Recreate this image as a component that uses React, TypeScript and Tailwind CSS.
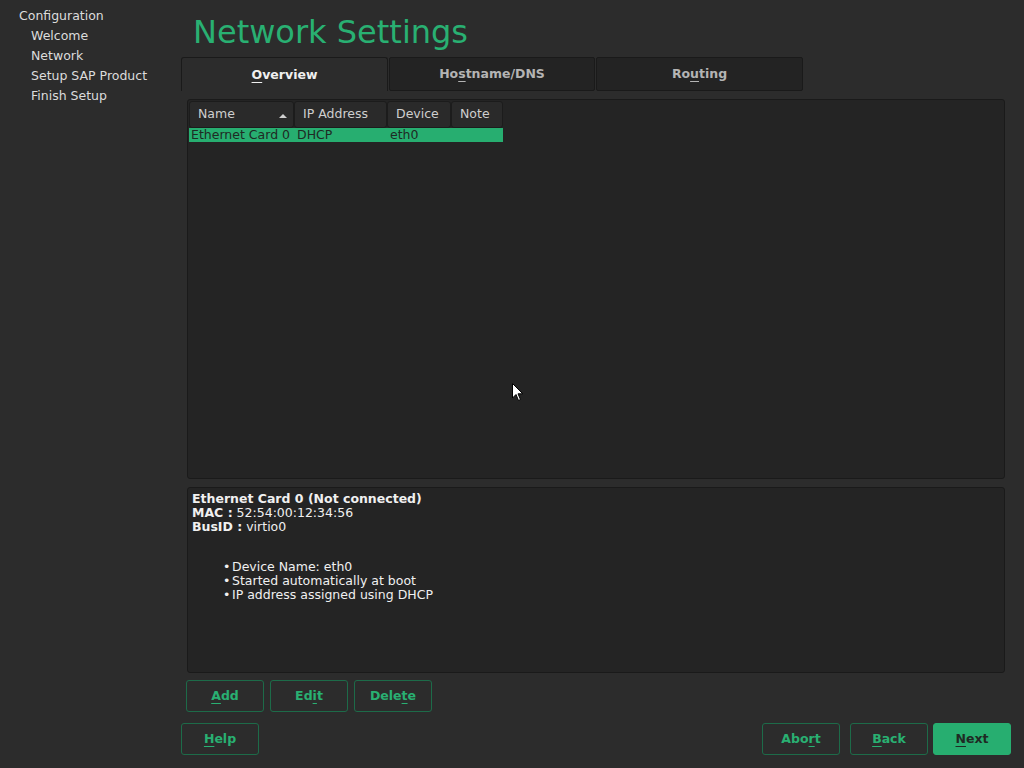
import React from "react";

const font = { fontFamily: '"DejaVu Sans", sans-serif' };

function Mn({ text, at }: { text: string; at: number }) {
  return (
    <>
      {text.slice(0, at)}
      <span className="underline underline-offset-[3px] decoration-1">{text[at]}</span>
      {text.slice(at + 1)}
    </>
  );
}

function Btn({ label, at, primary }: { label: string; at: number; primary?: boolean }) {
  return (
    <button
      className={
        "w-[78px] h-[32px] rounded-[3px] text-[12.5px] font-bold " +
        (primary
          ? "bg-[#27ae70] text-[#1f2a24] border border-[#27ae70]"
          : "border border-[#1d6b49] text-[#29b072] bg-transparent")
      }
    >
      <Mn text={label} at={at} />
    </button>
  );
}

export default function App() {
  const nav = ["Welcome", "Network", "Setup SAP Product", "Finish Setup"];
  const cols = [
    { label: "Name", w: "w-[105px]", sort: true },
    { label: "IP Address", w: "w-[93px]" },
    { label: "Device", w: "w-[64px]" },
    { label: "Note", w: "w-[52px]" },
  ];

  return (
    <div className="relative w-[1024px] h-[768px] bg-[#2c2c2c] flex text-[#dcdcdc] overflow-hidden" style={font}>
      {/* Sidebar */}
      <div className="w-[181px] shrink-0 pt-[6px] pl-[19px] text-[12.5px] leading-[20px]">
        <div>Configuration</div>
        {nav.map((n) => (
          <div key={n} className="pl-[12px]">{n}</div>
        ))}
      </div>

      {/* Main */}
      <div className="flex-1 flex flex-col">
        <h1 className="ml-[12px] pt-[13px] text-[32px] leading-[38px] text-[#29b072]">Network Settings</h1>

        {/* Tabs */}
        <div className="mt-[6px] flex gap-[1px] h-[34px]">
          <div className="w-[207px] pt-[2px] rounded-t-[3px] border border-b-0 border-[#1a1a1a] bg-[#2c2c2c] flex items-center justify-center text-[12.5px] font-bold text-[#f0f0f0]">
            <Mn text="Overview" at={0} />
          </div>
          <div className="w-[206px] rounded-[2px] border border-[#1a1a1a] bg-[#232323] flex items-center justify-center text-[12.5px] font-bold text-[#b4b4b4]">
            <Mn text="Hostname/DNS" at={2} />
          </div>
          <div className="w-[207px] rounded-[2px] border border-[#1a1a1a] bg-[#232323] flex items-center justify-center text-[12.5px] font-bold text-[#b4b4b4]">
            <Mn text="Routing" at={2} />
          </div>
        </div>

        {/* Table panel */}
        <div className="ml-[6px] mr-[19px] mt-[8px] h-[380px] rounded-[3px] border border-[#1a1a1a] bg-[#242424] p-px">
          <div className="flex h-[27px]">
            {cols.map((c) => (
              <div
                key={c.label}
                className={`${c.w} relative rounded-[3px] border border-[#1c1c1c] bg-[#2a2a2a] flex items-center pl-[8px] pb-[1px] text-[12.5px] text-[#cfcfcf]`}
              >
                {c.label}
                {c.sort && (
                  <svg className="absolute right-[6px] top-[12px]" width="8" height="4" viewBox="0 0 8 4">
                    <path d="M0 4 L4 0 L8 4 Z" fill="#cfcfcf" />
                  </svg>
                )}
              </div>
            ))}
          </div>
          <div className="flex h-[14px] w-[314px] bg-[#27ae70] text-[12.5px] leading-[14px] text-[#1f2a24]">
            <div className="w-[105px] pl-[2px] whitespace-nowrap">Ethernet Card 0</div>
            <div className="w-[93px] pl-[3px]">DHCP</div>
            <div className="w-[64px] pl-[3px]">eth0</div>
            <div className="w-[52px]" />
          </div>
        </div>

        {/* Detail panel */}
        <div className="ml-[6px] mr-[19px] mt-[8px] h-[186px] rounded-[3px] border border-[#1a1a1a] bg-[#242424] pt-[4px] pl-[4px] text-[12.5px] leading-[14px] text-[#f0f0f0]">
          <div className="font-bold">Ethernet Card 0 (Not connected)</div>
          <div><span className="font-bold">MAC :</span> 52:54:00:12:34:56</div>
          <div><span className="font-bold">BusID :</span> virtio0</div>
          <ul className="mt-[26px] ml-[31px]">
            {["Device Name: eth0", "Started automatically at boot", "IP address assigned using DHCP"].map((t) => (
              <li key={t} className="flex">
                <span className="w-[9px]">•</span>
                {t}
              </li>
            ))}
          </ul>
        </div>

        {/* Row buttons */}
        <div className="ml-[5px] mt-[7px] flex gap-[6px]">
          <Btn label="Add" at={0} />
          <Btn label="Edit" at={2} />
          <Btn label="Delete" at={4} />
        </div>

        {/* Bottom bar */}
        <div className="mt-[11px] mr-[13px] flex items-center">
          <Btn label="Help" at={0} />
          <div className="flex-1" />
          <Btn label="Abort" at={3} />
          <div className="w-[10px]" />
          <Btn label="Back" at={0} />
          <div className="w-[5px]" />
          <Btn label="Next" at={0} primary />
        </div>
      </div>

      {/* Mouse cursor */}
      <svg className="absolute left-[512px] top-[383px]" width="12" height="19" viewBox="0 0 12 19">
        <path d="M0.5 0.5 L0.5 15 L4 11.5 L6.5 17.5 L8.5 16.5 L6 10.8 L10.8 10.8 Z" fill="#ffffff" stroke="#000000" strokeWidth="1" />
      </svg>
    </div>
  );
}
